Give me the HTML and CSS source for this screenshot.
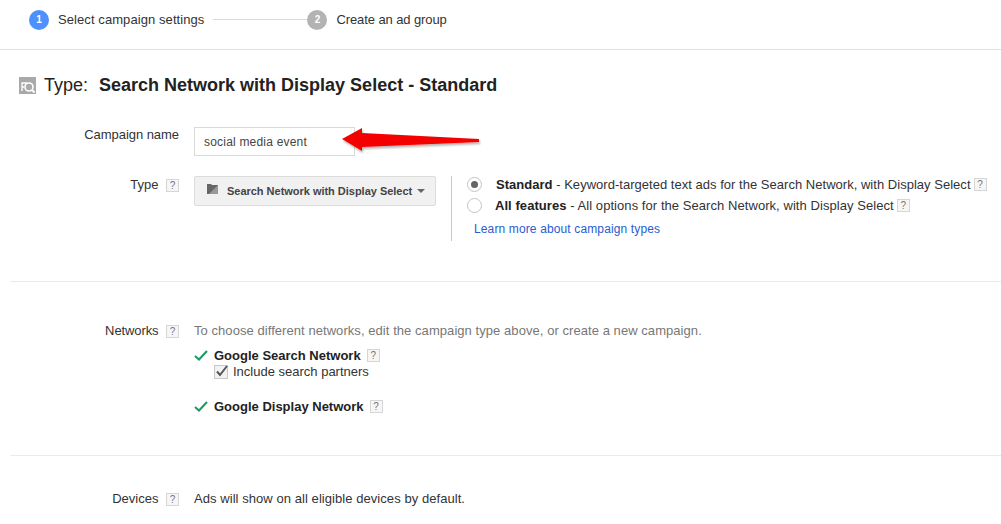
FILE: index.html
```html
<!DOCTYPE html>
<html lang="en">
<head>
<meta charset="utf-8">
<title>Select campaign settings</title>
<link rel="stylesheet" href="styles.css">
</head>
<body>
<header class="stepper">
  <span class="step-num step-active">1</span>
  <span class="step-label label-one">Select campaign settings</span>
  <span class="step-line"></span>
  <span class="step-num step-idle">2</span>
  <span class="step-label label-two">Create an ad group</span>
</header>
<main class="page">
  <h1 class="title">
    <svg class="title-icon" width="17" height="17" viewBox="0 0 17 17"><rect width="17" height="17" fill="#a9a9a9"/><path d="M3 14V6h5M3 10h2" fill="none" stroke="#fff" stroke-width="1.300"/><circle cx="10" cy="10" r="4" fill="none" stroke="#fff" stroke-width="1.600"/><path d="M12.800 12.800L15.500 15.500" stroke="#fff" stroke-width="2"/></svg>
    <span class="title-type">Type:</span>
    <strong class="title-name">Search Network with Display Select - Standard</strong>
  </h1>

  <section class="form-block block-campaign">
    <div class="row row-name">
      <div class="label label-name">Campaign name</div>
      <div class="field name-field">
        <div class="name-input">social media event</div>
        <svg class="arrow" width="145" height="30" viewBox="0 0 145 30"><defs><filter id="s" x="-10%" y="-20%" width="120%" height="150%"><feDropShadow dx="1" dy="2" stdDeviation="1" flood-color="#000" flood-opacity=".3"/></filter></defs><path d="M1 13L21 2V7L138 13V16L21 21V25Z" fill="#f40000" filter="url(#s)"/></svg>
      </div>
    </div>
    <div class="row row-type">
      <div class="label">Type <span class="help">?</span></div>
      <div class="field type-field">
        <button class="type-button" type="button">
          <svg width="11" height="10" viewBox="0 0 11 10"><path d="M0 0h4l1 1h6v9H0z" fill="#666"/><path d="M11 1v9H2z" fill="#999"/></svg>
          <span class="type-text">Search Network with Display Select</span>
          <i class="caret"></i>
        </button>
        <div class="type-options">
          <div class="option option-first"><span class="radio radio-on"></span><span class="option-text opt-std"><b>Standard</b> - Keyword-targeted text ads for the Search Network, with Display Select</span><span class="help">?</span></div>
          <div class="option option-second"><span class="radio"></span><span class="option-text opt-all"><b>All features</b> - All options for the Search Network, with Display Select</span><span class="help">?</span></div>
          <a class="learn" href="#">Learn more about campaign types</a>
        </div>
      </div>
    </div>
  </section>

  <section class="form-block block-networks">
    <div class="row">
      <div class="label label-net">Networks <span class="help">?</span></div>
      <div class="field col">
        <div class="muted">To choose different networks, edit the campaign type above, or create a new campaign.</div>
        <div class="network net-search">
          <svg class="check" width="14" height="11" viewBox="0 0 14 11"><path d="M1 6l4 3.500L13 1" fill="none" stroke="#1a9c5f" stroke-width="2"/></svg>
          <b>Google Search Network</b><span class="help help-net">?</span>
        </div>
        <div class="partners">
          <span class="checkbox"><svg width="14" height="13" viewBox="0 0 14 13"><path d="M3 6.500l3 3.500L13 1" fill="none" stroke="#555" stroke-width="2"/></svg></span>
          <span>Include search partners</span>
        </div>
        <div class="network net-display">
          <svg class="check" width="14" height="11" viewBox="0 0 14 11"><path d="M1 6l4 3.500L13 1" fill="none" stroke="#1a9c5f" stroke-width="2"/></svg>
          <b>Google Display Network</b><span class="help help-net">?</span>
        </div>
      </div>
    </div>
  </section>

  <section class="form-block block-devices">
    <div class="row">
      <div class="label">Devices <span class="help">?</span></div>
      <div class="field devices-text">Ads will show on all eligible devices by default.</div>
    </div>
  </section>
</main>
</body>
</html>
```
FILE: styles.css
```css
* { box-sizing: border-box; }
html, body { margin: 0; height: 524px; overflow: hidden; }
body { background: #fff; color: #333; font: 13px/15px "Liberation Sans", Arial, sans-serif; }
b { font-weight: 700; color: #222; }

.stepper { display: flex; align-items: center; height: 50px; padding: 0 0 10px 29px; border-bottom: 1px solid #e0e0e0; }
.step-num { width: 20px; height: 20px; border-radius: 50%; color: #fff; font-size: 10px; font-weight: 700; line-height: 20px; text-align: center; }
.step-active { background: #4d90fe; }
.step-idle { background: #b3b3b3; }
.step-label { margin-left: 9px; font-size: 13px; }
.label-one { letter-spacing: .08px; }
.label-two { letter-spacing: -.1px; }
.step-line { width: 94px; height: 1px; margin-left: 9px; background: #d9d9d9; }

.page { padding-left: 10px; }
.title { display: flex; align-items: center; height: 20px; margin: 25px 0 0 9px; font-size: 18px; font-weight: 400; color: #222; }
.title-icon { flex: none; }
.title-type { margin-left: 8px; }
.title-name { margin-left: 11px; }

.row { display: flex; }
.label { width: 170px; padding-right: 1px; text-align: right; color: #333; flex: none; }
.label-name { letter-spacing: -.05px; }
.label-net { letter-spacing: -.1px; }
.field { margin-left: 14px; }
.col { display: flex; flex-direction: column; }
.help { display: inline-block; width: 13px; height: 13px; margin-left: 4px; border: 1px solid #d6d6d6; background: #f6f6f6; color: #777; font-size: 10px; line-height: 11px; text-align: center; vertical-align: 0; }

.form-block { border-bottom: 1px solid #ebebeb; }
.block-campaign { height: 160px; margin-top: 27px; padding-top: 5px; }
.row-name { height: 49px; }
.name-field { position: relative; }
.name-input { width: 161px; height: 29px; border: 1px solid #d9d9d9; padding: 7px 9px 0; color: #444; font-size: 12px; letter-spacing: .2px; }
.arrow { position: absolute; left: 147px; top: -1px; }
.row-type .label { padding-top: 1px; }
.type-field { display: flex; }
.type-button { display: flex; align-items: center; width: 242px; height: 30px; padding: 0 12px; border: 1px solid #dcdcdc; border-radius: 2px; background: #f1f1f1; color: #444; font: 700 11px/15px "Liberation Sans", Arial, sans-serif; }
.type-button svg { flex: none; margin: -5px 9px 0 0; }
.type-text { white-space: nowrap; letter-spacing: -.02px; }
.caret { flex: none; width: 0; height: 0; margin-left: 5px; border: 4px solid transparent; border-top-color: #666; border-bottom: 0; }
.type-options { width: 550px; height: 65px; margin-left: 15px; padding: 0 0 0 15px; border-left: 1px solid #c8c8c8; }
.option { display: flex; align-items: center; height: 21px; white-space: nowrap; }
.option-first { height: 17px; }
.option-second { margin-top: 2px; }
.radio { flex: none; width: 15px; height: 15px; border: 1px solid #c4c4c4; border-radius: 50%; background: #fff; }
.radio-on { position: relative; }
.radio-on::after { content: ""; position: absolute; left: 3px; top: 3px; width: 7px; height: 7px; border-radius: 50%; background: #666; }
.opt-std { margin-left: 14px; letter-spacing: .025px; }
.opt-all { margin-left: 13px; letter-spacing: .06px; }
.option .help { margin-left: 3px; }
.learn { display: block; margin: 6px 0 0 7px; color: #2a5bd0; font-size: 12px; letter-spacing: .13px; text-decoration: none; }

.block-networks { height: 174px; padding-top: 41px; }
.muted { color: #777; letter-spacing: .06px; }
.network { display: flex; align-items: center; height: 15px; }
.network b { margin-left: 6px; }
.check { flex: none; }
.help-net { margin-left: 6px; }
.net-search { margin-top: 10px; }
.partners { display: flex; align-items: center; height: 15px; margin-top: 1px; padding-left: 20px; }
.checkbox { flex: none; width: 14px; height: 14px; margin-right: 5px; border: 1px solid #c8c8c8; background: #f2f2f2; }
.checkbox svg { display: block; margin: -1px 0 0 -1px; }
.net-display { margin-top: 20px; }

.block-devices { border-bottom: 0; padding-top: 35px; }
.devices-text { letter-spacing: .06px; }
```
